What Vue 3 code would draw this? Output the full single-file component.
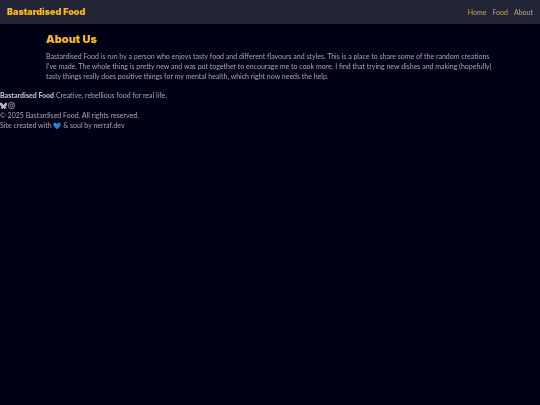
<template>
  <div class="site">
    <header class="site-header">
      <a href="#" class="brand">Bastardised Food</a>
      <nav class="menu">
        <a v-for="link in links" :key="link" href="#">{{ link }}</a>
      </nav>
    </header>

    <main class="content">
      <h1>About Us</h1>
      <p>
        Bastardised Food is run by a person who enjoys tasty food and different flavours and styles.
        This is a place to share some of the random creations I've made. The whole thing is pretty new
        and was put together to encourage me to cook more. I find that trying new dishes and making
        (hopefully) tasty things really does positive things for my mental health, which right now
        needs the help.
      </p>
    </main>

    <footer class="site-footer">
      <div><strong>Bastardised Food</strong> Creative, rebellious food for real life.</div>
      <div class="social">
        <a href="#" aria-label="Bluesky">
          <svg viewBox="0 0 24 24" fill="currentColor">
            <path d="M5.2 2.9C8 5 11 9.200 12 11.500C13 9.200 16 5 18.800 2.900C20.800 1.400 24 .2 24 3.900C24 4.700 23.600 10.100 23.300 11.100C22.400 14.400 19 15.200 16 14.700C21.300 15.600 22.600 18.600 19.700 21.500C14.200 27 12.500 20 12 18.500C11.500 20 9.800 27 4.300 21.500C1.400 18.600 2.700 15.600 8 14.700C5 15.200 1.600 14.400.7 11.100C.4 10.100 0 4.700 0 3.900C0 .2 3.200 1.400 5.200 2.900Z" />
          </svg>
        </a>
        <a href="#" aria-label="Instagram">
          <svg viewBox="0 0 24 24" fill="none" stroke="currentColor" stroke-width="2.4">
            <rect x="2" y="2" width="20" height="20" rx="6" />
            <circle cx="12" cy="12" r="5" />
            <circle cx="18" cy="6" r="1.400" fill="currentColor" stroke="none" />
          </svg>
        </a>
      </div>
      <div>&copy; {{ year }} Bastardised Food. All rights reserved.</div>
      <div class="credit">
        Site created with
        <svg class="heart" viewBox="0 0 24 24" role="img" aria-label="love">
          <path fill="#1c80de" d="M12 22C9 19 1 14 1 7.500C1 1 9 0 12 6C15 0 23 1 23 7.500C23 14 15 19 12 22Z" />
          <ellipse cx="6.500" cy="6.500" rx="3" ry="2" fill="#42a5f5" transform="rotate(-35 6.500 6.500)" />
        </svg>
        &amp; soul by <a href="#">nerraf.dev</a>
      </div>
    </footer>
  </div>
</template>

<script setup>
const year = 2025
const links = ['Home', 'Food', 'About']
</script>

<style>
body {
  background: #000014;
}
</style>

<style scoped>
.site {
  color: #a6a6b0;
  font-family: Lato, sans-serif;
  font-size: 7px;
  line-height: 10px;
  will-change: transform;
}

a {
  color: inherit;
  text-decoration: none;
}

.site-header {
  display: flex;
  align-items: center;
  justify-content: space-between;
  padding: 7px;
  background: #222536;
}

.brand,
h1 {
  color: #fbb91a;
  font-family: Inter, sans-serif;
  font-weight: 900;
}

.brand {
  font-size: 9px;
}

.menu {
  display: flex;
  gap: 6px;
  color: #c9a552;
}

.content {
  max-width: 448px;
  margin: 0 auto;
  padding-top: 8px;
}

h1 {
  margin: 0 0 5px;
  font-size: 11px;
  line-height: 14px;
}

p {
  margin: 0 0 9px;
}

strong {
  color: #c0c0c8;
  font-weight: 900;
}

.social {
  display: flex;
  align-items: center;
  gap: 1px;
  height: 10px;
  color: #bcbcc4;
}

.social svg {
  display: block;
  width: 7px;
  height: 7px;
}

.heart {
  width: 8px;
  height: 8px;
  vertical-align: middle;
}
</style>
